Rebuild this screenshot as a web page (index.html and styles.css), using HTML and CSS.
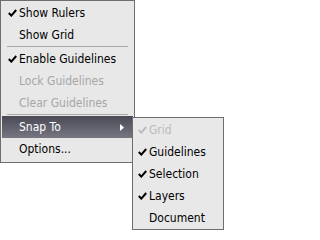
FILE: index.html
```
<!DOCTYPE html>
<html>
<head>
<meta charset="utf-8">
<link rel="stylesheet" href="styles.css">
</head>
<body>
<div class="menu">
  <div class="item"><span class="chk"><svg width="9" height="8" viewBox="0 0 9 8"><path d="M0.8 4 L3.3 6.6 L8.2 1" fill="none" stroke="currentColor" stroke-width="2"/></svg></span><span>Show Rulers</span></div>
  <div class="item"><span class="chk"></span><span>Show Grid</span></div>
  <div class="sep"></div>
  <div class="item"><span class="chk"><svg width="9" height="8" viewBox="0 0 9 8"><path d="M0.8 4 L3.3 6.6 L8.2 1" fill="none" stroke="currentColor" stroke-width="2"/></svg></span><span>Enable Guidelines</span></div>
  <div class="item disabled"><span class="chk"></span><span>Lock Guidelines</span></div>
  <div class="item disabled"><span class="chk"></span><span>Clear Guidelines</span></div>
  <div class="sep"></div>
  <div class="item active"><span class="chk"></span><span class="label">Snap To</span><svg class="arrow" width="4" height="7" viewBox="0 0 4 7"><path d="M0 0 L4 3.5 L0 7 Z" fill="#fff"/></svg></div>
  <div class="item"><span class="chk"></span><span>Options...</span></div>
</div>
<div class="submenu">
  <div class="item disabled"><span class="chk"><svg width="9" height="8" viewBox="0 0 9 8"><path d="M0.8 4 L3.3 6.6 L8.2 1" fill="none" stroke="currentColor" stroke-width="2"/></svg></span><span>Grid</span></div>
  <div class="item"><span class="chk"><svg width="9" height="8" viewBox="0 0 9 8"><path d="M0.8 4 L3.3 6.6 L8.2 1" fill="none" stroke="currentColor" stroke-width="2"/></svg></span><span>Guidelines</span></div>
  <div class="item"><span class="chk"><svg width="9" height="8" viewBox="0 0 9 8"><path d="M0.8 4 L3.3 6.6 L8.2 1" fill="none" stroke="currentColor" stroke-width="2"/></svg></span><span>Selection</span></div>
  <div class="item"><span class="chk"><svg width="9" height="8" viewBox="0 0 9 8"><path d="M0.8 4 L3.3 6.6 L8.2 1" fill="none" stroke="currentColor" stroke-width="2"/></svg></span><span>Layers</span></div>
  <div class="item"><span class="chk"></span><span>Document</span></div>
</div>
</body>
</html>
```
FILE: styles.css
```
html, body {
  margin: 0;
  padding: 0;
  background: #fff;
}
body {
  position: relative;
  width: 224px;
  height: 230px;
  overflow: hidden;
  font-family: "DejaVu Sans Condensed", "DejaVu Sans", Verdana, sans-serif;
  font-size: 12px;
  color: #000;
}
.menu {
  box-sizing: border-box;
  width: 135px;
  border: 1px solid #6e6e6e;
  background: #e8e8e8;
  padding: 1px 1px 2px 1px;
}
.item {
  display: flex;
  align-items: center;
  height: 22px;
  padding-left: 6px;
  white-space: nowrap;
}
.chk {
  display: flex;
  align-items: center;
  width: 11px;
  height: 22px;
  flex: none;
}
.disabled {
  color: #a6a6a6;
}
.submenu .disabled {
  color: #bcbcbc;
}
.sep {
  height: 1px;
  margin: 0 5px 1px 5px;
  background: #a8a8a8;
}
.active {
  color: #fff;
  background: linear-gradient(#4a4a57, #777783);
}
.label {
  flex: 1;
}
.arrow {
  margin-right: 9px;
}
.submenu {
  position: absolute;
  left: 132px;
  top: 117px;
  box-sizing: border-box;
  width: 92px;
  height: 113px;
  border: 1px solid #6e6e6e;
  background: #e8e8e8;
  padding-top: 1px;
}
.submenu .item {
  padding-left: 5px;
}
```
